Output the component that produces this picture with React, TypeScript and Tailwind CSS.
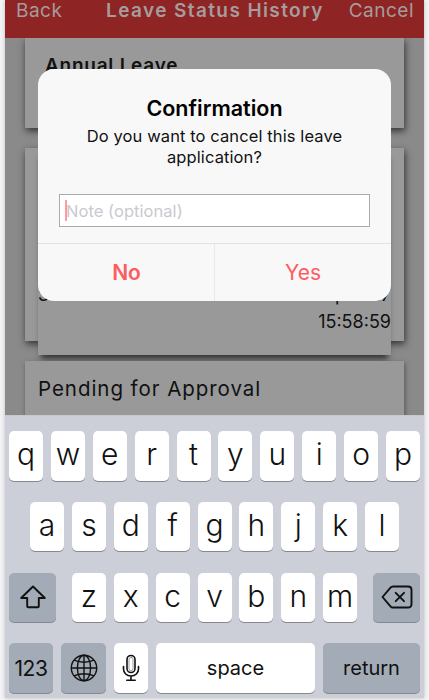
import type { ReactNode } from 'react'

interface KeyProps {
  children: ReactNode
  className?: string
  dark?: boolean
  label?: string
}

function Key({ children, className = 'w-[34px]', dark = false, label }: KeyProps) {
  return (
    <button
      aria-label={label}
      className={`flex h-[49.5px] shrink-0 items-center justify-center rounded-[5px] text-[#111] shadow-[0_1px_0.5px_#85888c] ${dark ? 'bg-[#a3abb6]' : 'bg-white'} ${className}`}
    >
      {children}
    </button>
  )
}

function Letters({ row }: { row: string }) {
  return (
    <>
      {row.split('').map(letter => (
        <Key key={letter}>
          <span className="relative -top-[1.5px] text-[30px] leading-none font-[350]">{letter}</span>
        </Key>
      ))}
    </>
  )
}

function ShiftIcon() {
  return (
    <svg width="28" height="26" viewBox="0 0 28 26" fill="none" stroke="#111" strokeWidth="1.9" strokeLinejoin="round">
      <path d="M14 2.5 L25.8 14 H19.8 V22.3 Q19.8 23.3 18.8 23.3 H9.2 Q8.2 23.3 8.2 22.3 V14 H2.2 Z" />
    </svg>
  )
}

function DeleteIcon() {
  return (
    <svg width="32" height="24" viewBox="0 0 32 24" fill="none" stroke="#111" strokeWidth="1.9" strokeLinecap="round" strokeLinejoin="round">
      <path d="M12 1.5 H27 Q30.5 1.5 30.5 5 V19 Q30.5 22.5 27 22.5 H12 Q10.5 22.5 9.5 21.3 L1.5 12 L9.5 2.7 Q10.5 1.5 12 1.5 Z" />
      <path d="M14.7 7.8 L23 16.2 M23 7.8 L14.7 16.2" />
    </svg>
  )
}

function GlobeIcon() {
  return (
    <svg width="28" height="28" viewBox="0 0 28 28" fill="none" stroke="#111" strokeWidth="1.4">
      <circle cx="14" cy="14" r="12.7" />
      <ellipse cx="14" cy="14" rx="6.6" ry="12.7" />
      <path d="M14 1.3 V26.7 M1.3 14 H26.7 M4 6.2 Q14 10.2 24 6.2 M4 21.8 Q14 17.8 24 21.8" />
    </svg>
  )
}

function MicIcon() {
  return (
    <svg width="18" height="28" viewBox="0 0 18 28" fill="none" stroke="#111" strokeWidth="1.6" strokeLinecap="round">
      <rect x="5" y="1.5" width="8" height="17" rx="4" />
      <rect x="7" y="3.4" width="4" height="13.2" rx="2" strokeWidth="0.4" />
      <path d="M1.5 12.5 V15 C1.5 19 4.7 22 9 22 C13.3 22 16.5 19 16.5 15 V12.5 M9 22 V26 M4.8 26.2 H13.2" />
    </svg>
  )
}

function Keyboard() {
  return (
    <section className="flex h-[283px] flex-col gap-[21.3px] border-t border-[#c5c8d0] bg-[#cccfd8] px-1 pt-[15px]">
      <div className="flex gap-[7.9px]"><Letters row="qwertyuiop" /></div>
      <div className="flex gap-[7.9px] pl-[21px]"><Letters row="asdfghjkl" /></div>
      <div className="flex justify-between">
        <Key dark className="w-[47px]" label="Shift"><ShiftIcon /></Key>
        <div className="flex gap-[7.9px]"><Letters row="zxcvbnm" /></div>
        <Key dark className="w-[47px]" label="Delete"><DeleteIcon /></Key>
      </div>
      <div className="flex gap-2">
        <Key dark className="w-[44px] text-[21px] tracking-[-0.4px]"><span className="relative top-px">123</span></Key>
        <Key dark className="w-[45px]" label="Next keyboard"><GlobeIcon /></Key>
        <Key label="Dictate"><MicIcon /></Key>
        <Key className="w-[159px] text-[20px]">space</Key>
        <Key dark className="w-[97px] text-[20px]">return</Key>
      </div>
    </section>
  )
}

function Alert() {
  return (
    <div role="dialog" className="absolute top-[69px] left-[33px] flex h-[232px] w-[353px] flex-col overflow-hidden rounded-[16px] bg-[#f8f8f8] text-center text-black">
      <div className="flex h-[174px] flex-col px-[21px] pt-[26px]">
        <h2 className="text-[21.5px] leading-[27px] font-semibold">Confirmation</h2>
        <p className="pt-[4px] text-[16.5px] leading-[21px] tracking-[0.1px] text-[#111]">
          Do you want to cancel this leave<br />application?
        </p>
        <div className="mt-[26px] flex h-[33px] w-[311px] items-center border border-[#ababab] bg-white pl-[5px]">
          <span className="h-[21px] w-[2px] bg-[#ff9a9e]" />
          <span className="-ml-px pt-px text-[16.5px] tracking-[0.05px] text-[#c9c9ce]">Note (optional)</span>
        </div>
      </div>
      <div className="flex flex-1 border-t border-[#e2e2e2] text-[21px] text-[#ff5c62]">
        <button className="w-[177px] border-r border-[#e8e8e8] pl-px font-semibold">No</button>
        <button className="flex-1">Yes</button>
      </div>
    </div>
  )
}

export default function App() {
  return (
    <div className="h-[700px] w-[429px] overflow-hidden bg-[#f3f4f5] pl-[5px] font-[Inter,sans-serif]">
      <main className="relative w-[419px] shadow-[0_0_4px_#bbb]">
        <header className="flex h-[38px] bg-[#8f2425] pr-[10px] pl-[11px] text-[19px] leading-[22px] text-[#a69c9c]">
          <span className="w-[90px] tracking-[0.5px]">Back</span>
          <h1 className="font-semibold tracking-[1.4px] whitespace-nowrap">Leave Status History</h1>
          <span className="ml-auto tracking-[0.5px]">Cancel</span>
        </header>

        <div className="flex h-[377px] flex-col overflow-hidden bg-[#8a8a8a] px-5 text-[#111]">
          <div className="h-[90px] shrink-0 bg-[#999] pt-4 pl-5 text-[19px] leading-6 font-semibold tracking-[0.75px] shadow-[1px_3px_7px_#333]">
            Annual Leave
          </div>
          <div className="mt-5 h-[193px] shrink-0 bg-[#999] px-[13px] shadow-[1px_3px_7px_#333]">
            <div className="flex h-[207px] items-end justify-between bg-[#999] pb-[20px] text-[18px] leading-[27px] shadow-[0_7px_6px_-3px_#333]">
              <span className="pb-[27px]">Submitted</span>
              <span className="text-right">28 Sep 2017<br />15:58:59</span>
            </div>
          </div>
          <div className="relative mt-5 h-[80px] shrink-0 bg-[#999] pt-[14px] pl-[13px] text-[20.5px] leading-7 tracking-[0.95px] shadow-[1px_2px_5px_#555]">
            Pending for Approval
          </div>
        </div>

        <Keyboard />
        <Alert />
      </main>
    </div>
  )
}
